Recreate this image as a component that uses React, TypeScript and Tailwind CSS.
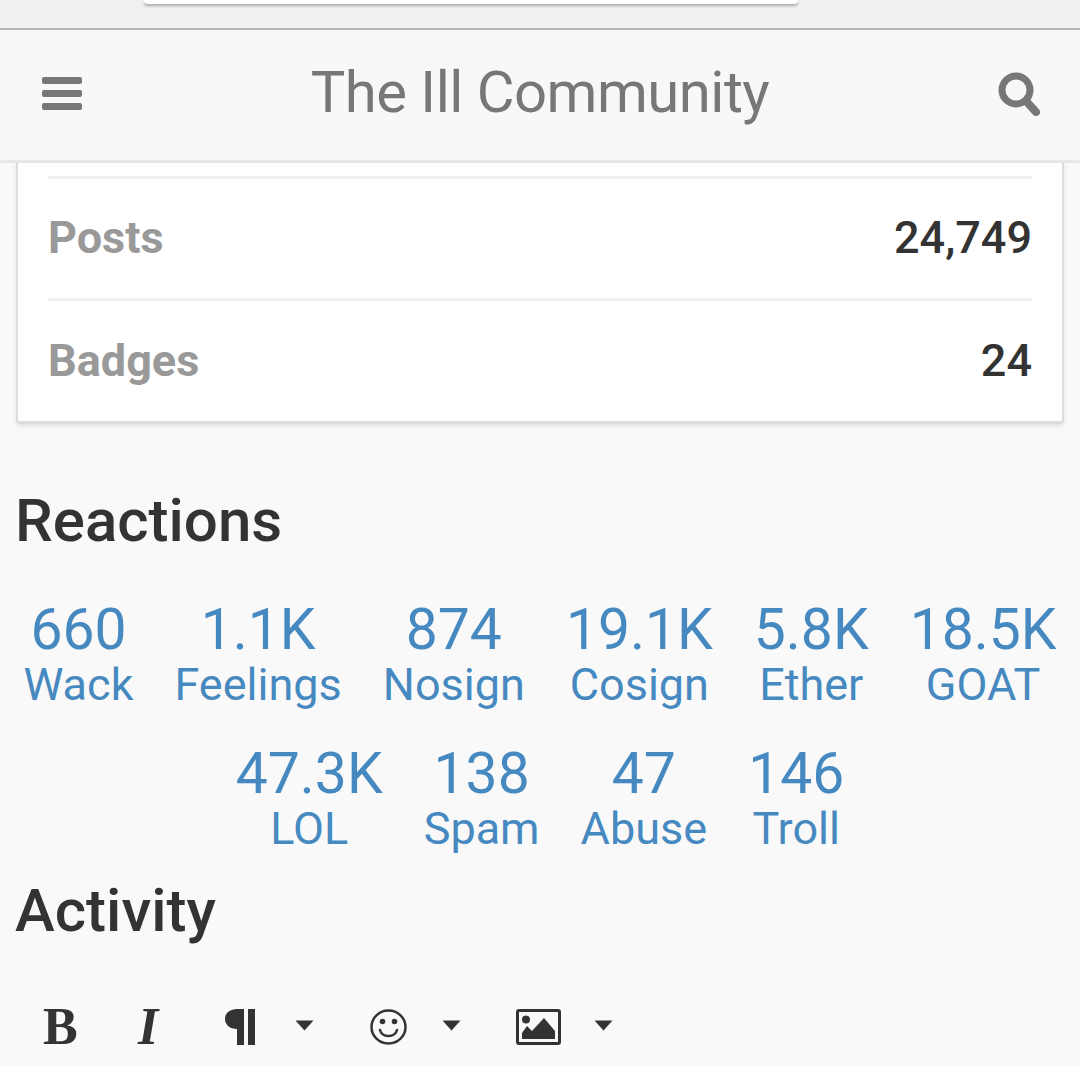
const reactions = [
  ['660', 'Wack'],
  ['1.1K', 'Feelings'],
  ['874', 'Nosign'],
  ['19.1K', 'Cosign'],
  ['5.8K', 'Ether'],
  ['18.5K', 'GOAT'],
  ['47.3K', 'LOL'],
  ['138', 'Spam'],
  ['47', 'Abuse'],
  ['146', 'Troll'],
];

function Caret() {
  return (
    <svg width="19" height="11" viewBox="0 0 19 11" className="shrink-0 -mt-[3px]">
      <path d="M0.5 0.5h18l-9 10z" fill="#333" />
    </svg>
  );
}

export default function App() {
  return (
    <div className="w-[1080px] h-[1065px] overflow-hidden bg-[#f9f9f9] font-['Roboto',sans-serif]">
      {/* browser strip */}
      <div className="h-[30px] bg-[#f1f1f1] border-b-2 border-[#b4b4b4] px-[144px]">
        <div className="w-[654px] h-[4px] bg-white rounded-b-md shadow-[0_2px_3px_rgba(0,0,0,0.3)]" />
      </div>

      {/* top bar */}
      <div className="h-[133px] bg-[#f8f8f8] border-b-[3px] border-[#e8e8e8] flex items-center justify-between pl-[42px] pr-[40px] text-[#777]">
        <svg width="40" height="33" viewBox="0 0 40 33" fill="#777" className="-mt-[4px]">
          <rect x="0" y="0" width="40" height="7" rx="2" />
          <rect x="0" y="13" width="40" height="7" rx="2" />
          <rect x="0" y="26" width="40" height="7" rx="2" />
        </svg>
        <div className="text-[58px] leading-none tracking-[-0.5px] -mt-[6px]">The Ill Community</div>
        <svg width="42" height="44" viewBox="0 0 42 44" fill="none" stroke="#777" className="-mt-[3px]">
          <circle cx="18" cy="18" r="14" strokeWidth="7" />
          <path d="M28 29l10 11" strokeWidth="8" strokeLinecap="round" />
        </svg>
      </div>

      {/* stats card */}
      <div className="mx-[16px] bg-white border-x-2 border-b-[3px] border-[#dcdcdc] rounded-b-[4px] shadow-[0_2px_5px_rgba(0,0,0,0.1)] px-[30px] pt-[13px]">
        <div className="border-t-[3px] border-[#f0f0f0] h-[122px] pb-[2px] flex items-center justify-between">
          <span className="text-[45px] font-bold text-[#999]">Posts</span>
          <span className="text-[45px] font-medium text-[#333]">24,749</span>
        </div>
        <div className="border-t-[3px] border-[#f0f0f0] h-[123px] flex items-center justify-between">
          <span className="text-[45px] font-bold text-[#999]">Badges</span>
          <span className="text-[45px] font-medium text-[#333]">24</span>
        </div>
      </div>

      <h2 className="mt-[60px] ml-[15px] text-[60px] leading-[74px] font-medium text-[#333]">Reactions</h2>

      <div className="mt-[44px] flex flex-wrap justify-center gap-x-[41px] px-[10px] text-[#4689c0]">
        {reactions.map(([n, l]) => (
          <div key={l} className="flex flex-col items-center h-[144px]">
            <span className="text-[57px] leading-[56px]">{n}</span>
            <span className="text-[45px] leading-[54px]">{l}</span>
          </div>
        ))}
      </div>

      <h2 className="-mt-[16px] ml-[15px] text-[60px] leading-[74px] font-medium text-[#333]">Activity</h2>

      {/* editor toolbar */}
      <div className="mt-[53px] pl-[43px] flex items-center text-[#333]">
        <span className="font-['Liberation_Serif',serif] font-bold text-[52px] leading-none w-[95px]">B</span>
        <span className="font-['Liberation_Serif',serif] italic font-bold text-[52px] leading-none w-[87px]">I</span>
        <svg width="30" height="36" viewBox="0 0 30 36" fill="#333" className="mr-[40px]">
          <path d="M12 0h7v36h-7V20C5 20 0 16 0 10S5 0 12 0zM23 0h7v36h-7z" />
        </svg>
        <Caret />
        <svg width="37" height="36" viewBox="0 0 37 36" fill="none" stroke="#333" className="ml-[56px] mr-[35px]">
          <ellipse cx="18.5" cy="18" rx="17" ry="16.5" strokeWidth="2.5" />
          <circle cx="12.5" cy="12.5" r="2.8" fill="#333" stroke="none" />
          <circle cx="24.5" cy="12.5" r="2.8" fill="#333" stroke="none" />
          <path d="M10 21c2 8 15 8 17 0" strokeWidth="2.5" strokeLinecap="round" />
        </svg>
        <Caret />
        <svg width="45" height="36" viewBox="0 0 45 36" fill="#333" className="ml-[55px] mr-[33px]">
          <path fillRule="evenodd" d="M3 0h39a3 3 0 013 3v30a3 3 0 01-3 3H3a3 3 0 01-3-3V3a3 3 0 013-3zm0 3v30h39V3z" />
          <circle cx="10" cy="10.500" r="4" />
          <path d="M6 30v-6l5-7 5 5 12-13 11 13v8z" />
        </svg>
        <Caret />
      </div>
    </div>
  );
}
